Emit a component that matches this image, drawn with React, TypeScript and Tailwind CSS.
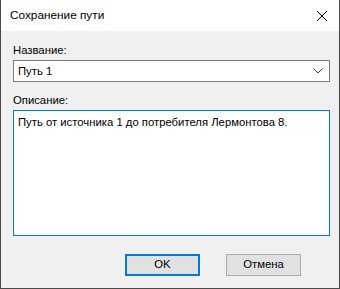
export default function App() {
  return (
    <div
      className="w-[340px] h-[289px] bg-[#4a4a4a] text-black text-[11.3px]"
      style={{ fontFamily: '"Liberation Sans", "Segoe UI", sans-serif' }}
    >
      <div className="w-[338px] h-[288px] ml-px flex flex-col bg-[#f0f0f0]">
        <div className="h-[31px] flex items-center justify-between bg-white pl-[9px] pr-[10px]">
          <span className="leading-none text-[11.8px]">Сохранение пути</span>
          <svg width="12" height="12" viewBox="0 0 12 12" className="mr-[1px]">
            <path d="M1 1 L11 11 M11 1 L1 11" stroke="#000" strokeWidth="1" />
          </svg>
        </div>

        <div className="flex flex-col px-[12px] pt-[12px]">
          <label className="leading-[14px]">Название:</label>
          <div className="mt-[3px] h-[22px] w-[317px] flex items-center justify-between border border-[#7a7a7a] bg-white pl-[4px] pr-[6px]">
            <span>Путь 1</span>
            <svg width="10" height="6" viewBox="0 0 10 6">
              <path d="M0.5 0.5 L5 5 L9.5 0.5" fill="none" stroke="#444" strokeWidth="1" />
            </svg>
          </div>

          <label className="mt-[11px] leading-[14px]">Описание:</label>
          <div className="mt-[3px] h-[126px] w-[317px] border border-[#0078d7] bg-white px-[4px] pt-[3px]">
            Путь от источника 1 до потребителя Лермонтова 8.
          </div>
        </div>

        <div className="flex justify-end gap-[26px] pr-[38px] pt-[18px]">
          <button className="w-[75px] h-[22px] border-2 border-[#0078d7] bg-[#e1e1e1] leading-none">
            OK
          </button>
          <button className="w-[75px] h-[22px] border border-[#adadad] bg-[#e1e1e1] leading-none">
            Отмена
          </button>
        </div>
      </div>
    </div>
  )
}
